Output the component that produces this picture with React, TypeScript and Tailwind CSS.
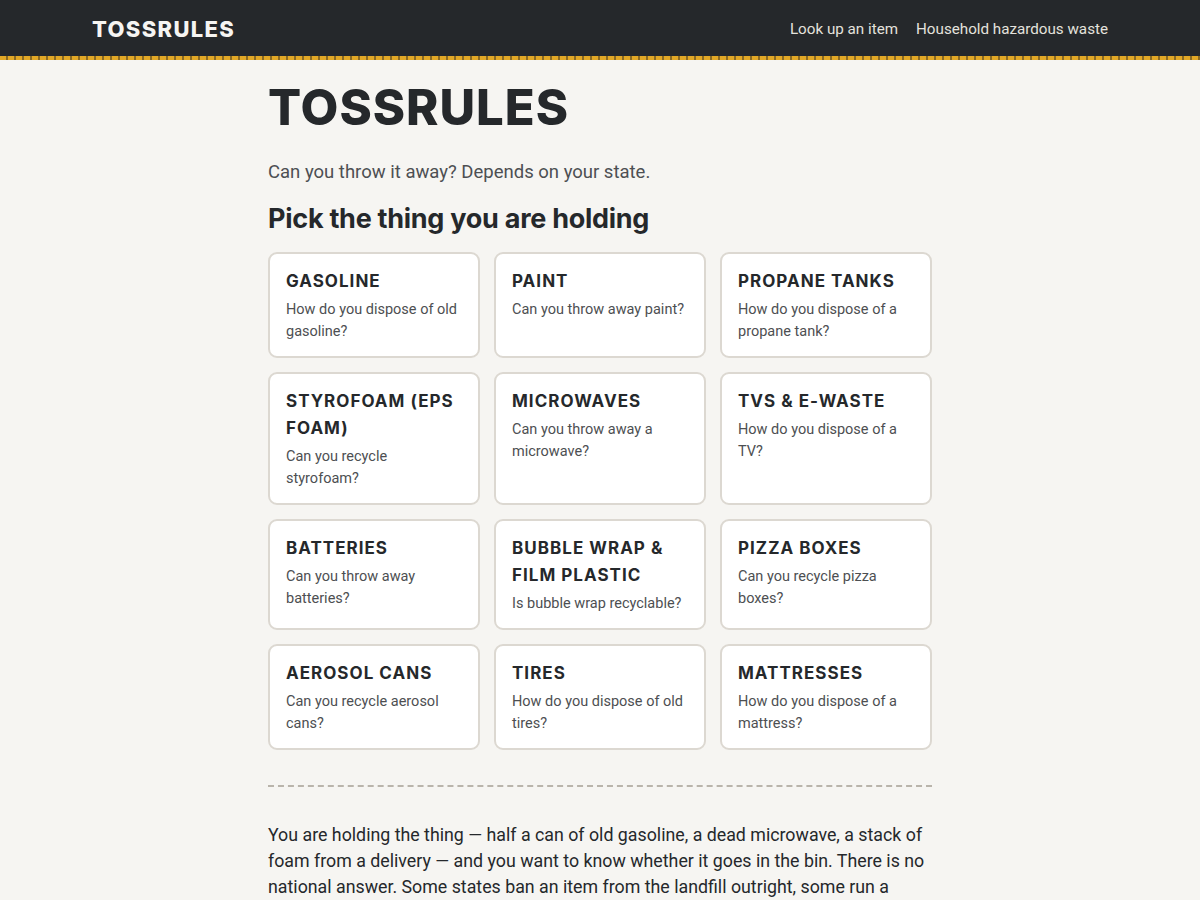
const items = [
  { title: 'Gasoline', desc: 'How do you dispose of old gasoline?' },
  { title: 'Paint', desc: 'Can you throw away paint?' },
  { title: 'Propane tanks', desc: 'How do you dispose of a propane tank?' },
  { title: 'Styrofoam (EPS foam)', desc: 'Can you recycle styrofoam?' },
  { title: 'Microwaves', desc: 'Can you throw away a microwave?' },
  { title: 'TVs & e-waste', desc: 'How do you dispose of a TV?' },
  { title: 'Batteries', desc: 'Can you throw away batteries?' },
  { title: 'Bubble wrap & film plastic', desc: 'Is bubble wrap recyclable?' },
  { title: 'Pizza boxes', desc: 'Can you recycle pizza boxes?' },
  { title: 'Aerosol cans', desc: 'Can you recycle aerosol cans?' },
  { title: 'Tires', desc: 'How do you dispose of old tires?' },
  { title: 'Mattresses', desc: 'How do you dispose of a mattress?' },
]

export default function App() {
  return (
    <div className="min-h-screen bg-[#f6f5f2] text-[#25282b] font-['Inter',sans-serif]">
      <header className="bg-[#25282b]">
        <div className="max-w-[1016px] mx-auto h-[56px] flex items-center justify-between">
          <a href="#" className="text-[22px] font-extrabold tracking-[0.06em] text-[#f6f5f2] pt-0.5">TOSSRULES</a>
          <nav className="flex items-center gap-[18px] text-[15.2px] text-[#e4e2dd] font-['Roboto',sans-serif] pt-[3px]">
            <a href="#">Look up an item</a>
            <a href="#">Household hazardous waste</a>
          </nav>
        </div>
        <div className="h-[4px] bg-[repeating-linear-gradient(90deg,#e2a826_0_6px,#8a6a24_6px_8px)]" />
      </header>

      <main className="max-w-[664px] mx-auto pt-[18px]">
        <h1 className="text-[49px] font-extrabold tracking-[0.02em] leading-[60px]">TOSSRULES</h1>
        <p className="mt-[21px] text-[18.5px] text-[#4d4f52] font-['Roboto',sans-serif]">Can you throw it away? Depends on your state.</p>
        <h2 className="mt-[14px] text-[27px] font-bold tracking-[-0.01em] leading-[36px]">Pick the thing you are holding</h2>

        <div className="mt-[15px] grid grid-cols-3 gap-x-[14px] gap-y-[14px]">
          {items.map(it => (
            <a key={it.title} href="#"
              className="bg-white border-2 border-[#dcd8d1] rounded-[9px] px-[16px] pt-[14px] pb-[13px] block">
              <div className="text-[17px] font-bold uppercase tracking-[0.06em] leading-[27px] text-[#25282b]">{it.title}</div>
              <div className="mt-[4px] text-[14.5px] leading-[22px] text-[#4d4f52] font-['Roboto',sans-serif]">{it.desc}</div>
            </a>
          ))}
        </div>

        <hr className="mt-[35px] border-0 border-t-2 border-dashed border-[#b9b4ab]" />

        <p className="mt-[35px] text-[17.8px] leading-[26px] text-[#25282b] font-['Roboto',sans-serif]">
          You are holding the thing — half a can of old gasoline, a dead microwave, a stack of foam from a delivery — and you want to know whether it goes in the bin. There is no national answer. Some states ban an item from the landfill outright, some run a take-back program, and some leave it to the county.
        </p>
      </main>
    </div>
  )
}
